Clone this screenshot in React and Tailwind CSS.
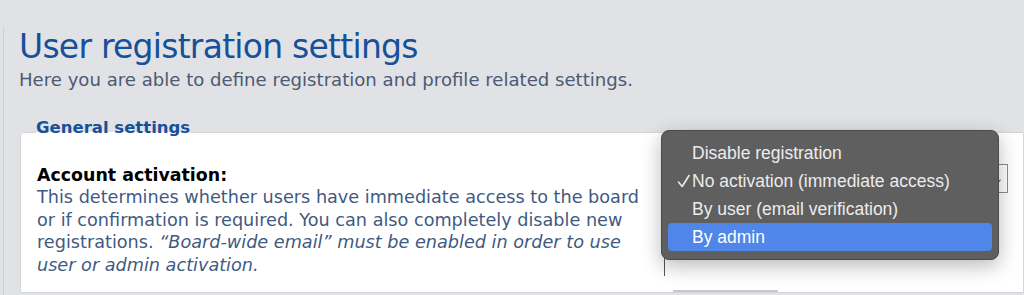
import React from "react";

export default function App() {
  return (
    <div className="relative h-[295px] w-[1024px] overflow-hidden bg-[#e1e2e6] font-['DejaVu_Sans',Verdana,sans-serif]">
      <div className="mt-[27px] ml-[3px] h-[400px] border-l border-[#cdd0d5] pl-[15px]">
        <h1 className="text-[33px] leading-[40px] tracking-[-0.75px] text-[#17509a]">User registration settings</h1>
        <p className="mt-[2px] text-[18.1px] leading-[22px] text-[#4c5a72]">
          Here you are able to define registration and profile related settings.
        </p>
        <fieldset className="mt-[27px] ml-[1px] rounded-tl-[5px] border border-[#d3d5d9] bg-white pl-[16px] pr-0">
          <legend className="-ml-[1px] px-0 pb-[8px] text-[16.5px] font-bold leading-[20px] text-[#17509a]">General settings</legend>
          <div className="flex pt-[18px]">
            <div className="w-[627px] shrink-0">
              <div className="text-[17.4px] font-bold leading-[22px] text-black">Account activation:</div>
              <p className="w-[614px] text-[17.65px] leading-[22.7px] text-[#3f5a82]">
                This determines whether users have immediate access to the board or if confirmation is required. You can also completely disable new registrations. <em>“Board-wide email” must be enabled in order to use user or admin activation.</em>
              </p>
            </div>
            <div className="flex flex-col">
              <div className="flex h-[29px] w-[344px] items-center justify-end border border-[#8d8d8d] pr-[4px]">
                <span className="text-[10px] text-[#333]">⌄</span>
              </div>
              <div className="mt-[63px] h-[20px] w-px bg-[#555]"></div>
              <div className="mt-[14px] ml-[9px] h-[2px] w-[105px] bg-[#c8c8c8]"></div>
            </div>
          </div>
        </fieldset>
      </div>

      <div className="absolute left-[661px] top-[130px] w-[338px] rounded-[8px] border border-[#4a4a4a] bg-[#5f5f5f] px-[6px] py-[8px] font-['Liberation_Sans',Arial,sans-serif] text-[17.5px] text-[#ececec] shadow-[0_6px_20px_rgba(0,0,0,0.28)]">
        <div className="flex h-[28px] items-center pl-[24px]">Disable registration</div>
        <div className="relative flex h-[28px] items-center pl-[24px]">
          <svg className="absolute left-[9px] top-[7px]" width="14" height="14" viewBox="0 0 14 14" fill="none">
            <path d="M1.5 8 L5.2 12.5 L12 1.5" stroke="#ececec" strokeWidth="1.6" strokeLinecap="round" strokeLinejoin="round" />
          </svg>
          No activation (immediate access)
        </div>
        <div className="flex h-[28px] items-center pl-[24px]">By user (email verification)</div>
        <div className="flex h-[28px] items-center rounded-[4px] bg-[#4f86e7] pl-[24px] text-white">By admin</div>
      </div>
    </div>
  );
}
